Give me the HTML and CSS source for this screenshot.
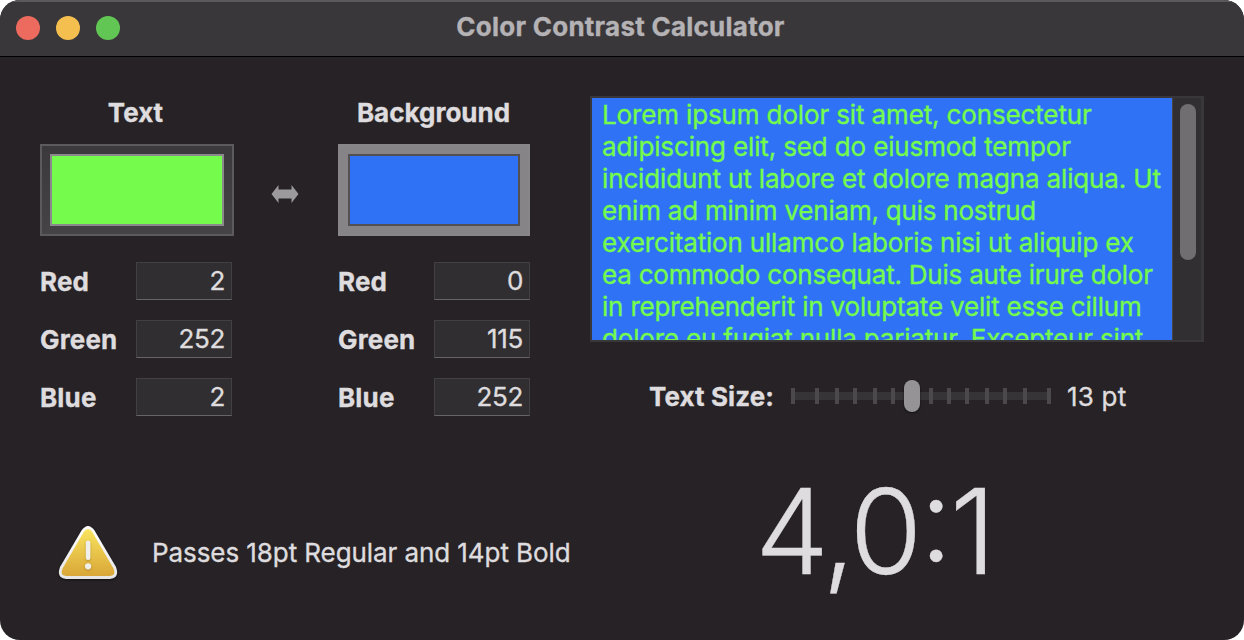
FILE: index.html
```
<!DOCTYPE html>
<html lang="en">
<head>
<meta charset="utf-8">
<title>Color Contrast Calculator</title>
<link rel="stylesheet" href="styles.css">
</head>
<body>
<main class="window">
  <header class="titlebar">
    <div class="lights"><i class="light close"></i><i class="light minimize"></i><i class="light expand"></i></div>
    <h1 class="title">Color Contrast Calculator</h1>
  </header>
  <div class="content">
    <section class="controls">
      <div class="pickers">
        <div class="picker">
          <h2 class="heading heading-text">Text</h2>
          <div class="well well-text"><div class="swatch"></div></div>
          <label class="channel"><span class="name red">Red</span><span class="field">2</span></label>
          <label class="channel"><span class="name green">Green</span><span class="field">252</span></label>
          <label class="channel"><span class="name blue">Blue</span><span class="field">2</span></label>
        </div>
        <svg class="swap" width="28" height="20" viewBox="0 0 28 20"><path d="M0.500 10 7.500 1V5.500H20.500V1L27.500 10 20.500 19V14.500H7.500V19Z" fill="#9c9a9c"/></svg>
        <div class="picker">
          <h2 class="heading heading-bg">Background</h2>
          <div class="well well-bg"><div class="swatch"></div></div>
          <label class="channel"><span class="name red">Red</span><span class="field">0</span></label>
          <label class="channel"><span class="name green">Green</span><span class="field">115</span></label>
          <label class="channel"><span class="name blue">Blue</span><span class="field">252</span></label>
        </div>
      </div>
      <div class="status">
        <svg class="warning" width="64" height="60" viewBox="0 0 64 60">
          <defs>
            <linearGradient id="gold" x1="0" y1="0" x2="0" y2="1"><stop offset="0" stop-color="#f9e45f"/><stop offset="1" stop-color="#d9a637"/></linearGradient>
            <linearGradient id="rim" x1="0" y1="0" x2="0" y2="1"><stop offset="0" stop-color="#ffffff"/><stop offset="1" stop-color="#e6e5e6"/></linearGradient>
          </defs>
          <path class="shadow" d="M25.500 6.500Q32-2.500 38.500 6.500L60 43Q64 54 54 55H10Q0 54 4 43Z" fill="url(#rim)"/>
          <path d="M28 7.500Q32 2.500 36 7.500L57.500 44.500Q60.500 51 54 52H10Q3.500 51 6.500 44.500Z" fill="url(#gold)"/>
          <g class="mark" fill="#f0efec"><rect x="29.800" y="16.500" width="4.600" height="19.500" rx="2.200"/><circle cx="32.100" cy="42.300" r="3.100"/></g>
        </svg>
        <span class="verdict">Passes 18pt Regular and 14pt Bold</span>
      </div>
    </section>
    <section class="preview">
      <div class="scrollview">
        <div class="sample">
          <span class="line l1">Lorem ipsum dolor sit amet, consectetur</span>
          <span class="line l2">adipiscing elit, sed do eiusmod tempor</span>
          <span class="line l3">incididunt ut labore et dolore magna aliqua. Ut</span>
          <span class="line l4">enim ad minim veniam, quis nostrud</span>
          <span class="line l5">exercitation ullamco laboris nisi ut aliquip ex</span>
          <span class="line l6">ea commodo consequat. Duis aute irure dolor</span>
          <span class="line l7">in reprehenderit in voluptate velit esse cillum</span>
          <span class="line l8">dolore eu fugiat nulla pariatur. Excepteur sint</span>
        </div>
        <div class="scroller"><div class="thumb"></div></div>
      </div>
      <div class="size">
        <span class="size-label">Text Size:</span>
        <svg class="slider" width="260" height="36" viewBox="0 0 260 36">
          <rect y="14" width="260" height="8" fill="#373438"/>
          <path d="M2 10v16M26 10v16M46 10v16M64 10v16M84 10v16M102 10v16M140 10v16M158 10v16M176 10v16M196 10v16M214 10v16M234 10v16M258 10v16" stroke="#4c494d" stroke-width="4"/>
          <rect class="knob" x="113" y="2" width="16" height="32" rx="8" fill="#969396"/>
        </svg>
        <span class="size-value">13 pt</span>
      </div>
      <div class="ratio">4,0:1</div>
    </section>
  </div>
</main>
</body>
</html>
```
FILE: styles.css
```
* { box-sizing: border-box; }
body { margin: 0; background: #fff; font-family: Inter, "Liberation Sans", sans-serif; font-size: 26px; color: #dedcde; -webkit-text-stroke: 0.35px; }
h1, h2 { margin: 0; font-size: 26px; font-weight: 700; }
.window { width: 1244px; height: 640px; display: flex; flex-direction: column; overflow: hidden; border-radius: 20px; background: #262225; }
.titlebar { height: 57px; flex: none; display: grid; grid-template-columns: 144px 1fr 147px; background: #3a373a; border-top: 2px solid #5b595b; border-bottom: 1px solid #000; }
.lights { display: flex; gap: 16px; padding: 14px 0 0 16px; }
.light { width: 24px; height: 24px; border-radius: 50%; }
.close { background: #ed6a5e; }
.minimize { background: #f5bf4f; }
.expand { background: #62c655; }
.title { line-height: 50px; text-align: center; color: #b4b2b4; font-weight: 700; letter-spacing: 0.25px; white-space: nowrap; }
.content { display: flex; padding: 39px 40px 0; }
.controls { width: 550px; }
.pickers { display: flex; }
.picker { width: 194px; }
.heading { height: 32px; line-height: 34px; margin: 0 3px 16px 0; white-space: nowrap; text-align: center; }
.well { height: 92px; padding: 8px; border: 2px solid #5d5a5d; background: linear-gradient(#3c393c, #464346); margin-bottom: 26px; }
.well-bg { width: 192px; border-color: #888688; background: #868486; }
.swatch { height: 72px; border: 2px solid #8b898b; background: #75fb4c; }
.well-bg .swatch { border-color: #525052; background: #3072f6; }
.channel { display: flex; justify-content: space-between; width: 192px; height: 38px; margin-bottom: 20px; line-height: 40px; }
.name { font-weight: 700; letter-spacing: 0.15px; }
.field { width: 96px; padding-right: 6px; line-height: 36px; letter-spacing: -0.3px; text-align: right; background: #312e31; border: 1px solid #434043; border-bottom: 1px solid #676467; }
.swap { width: 28px; margin: 88px 39px 0 37px; }
.status { display: flex; align-items: center; gap: 32px; height: 60px; margin: 88px 0 0 16px; }
.verdict { padding-bottom: 3px; letter-spacing: -0.08px; white-space: nowrap; }
.shadow, .knob { filter: drop-shadow(0 1px 1px #0008); }
.mark { filter: drop-shadow(0 1px 1px #8a6a2088); }
.preview { width: 614px; flex: none; }
.scrollview { height: 246px; display: flex; border: 2px solid #3a373a; overflow: hidden; }
.sample { width: 580px; flex: none; padding: 1px 0 0 10px; background: #3072f6; color: #75fb4c; overflow: hidden; }
.line { display: block; line-height: 32px; height: 32px; letter-spacing: -0.18px; white-space: nowrap; }
.l1, .l2, .l3 { letter-spacing: -0.14px; }
.l4, .l6 { letter-spacing: -0.22px; }
.scroller { flex: 1; padding: 6px 0 0 7px; background: #322f32; border-left: 1px solid #484548; border-right: 1px solid #3a373a; }
.thumb { width: 16px; height: 156px; border-radius: 8px; background: #706e71; }
.size { display: flex; align-items: center; height: 36px; margin-top: 36px; padding-left: 59px; }
.size-label { width: 142px; font-weight: 700; letter-spacing: 0.1px; white-space: nowrap; }
.size-value { padding-left: 16px; letter-spacing: 0.2px; white-space: nowrap; }
.ratio { margin: 47px 0 0 165px; height: 140px; line-height: 140px; font-size: 118px; font-weight: 300; letter-spacing: -3px; font-feature-settings: "calt" 1; white-space: nowrap; }
```
